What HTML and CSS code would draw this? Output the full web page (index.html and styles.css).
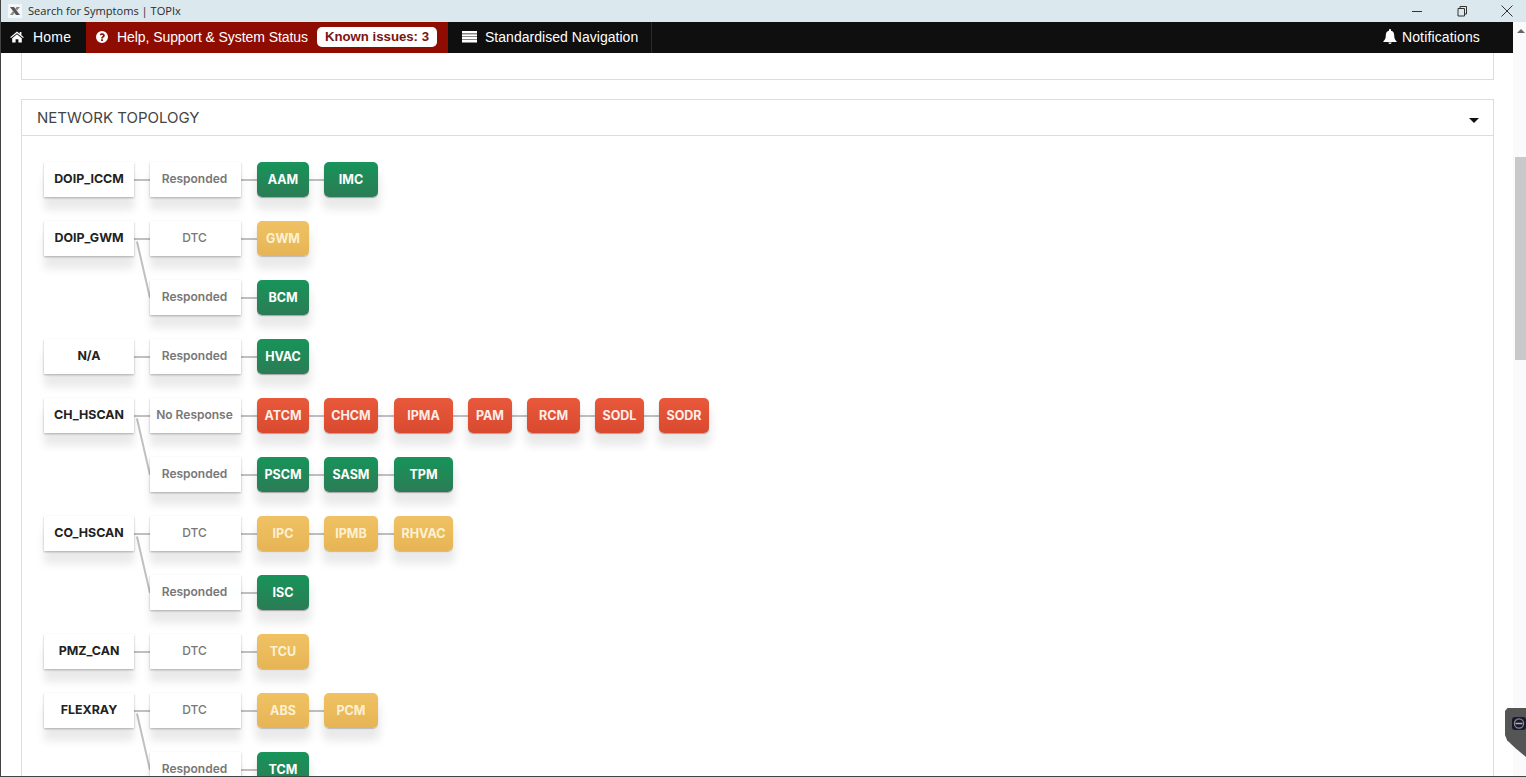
FILE: index.html
```html
<!DOCTYPE html>
<html lang="en">
<head>
<meta charset="utf-8">
<title>Search for Symptoms | TOPIx</title>
<link rel="stylesheet" href="styles.css">
</head>
<body>
<div class="window">
  <header class="titlebar">
    <svg class="favicon" viewBox="0 0 14 14"><rect width="14" height="14" fill="#f4f6f7"/><path d="M2 3 L6 3 L12 11 L8 11 Z" fill="#555"/><path d="M12 3 L8.5 3 L7.4 4.6 L9 6.6 Z" fill="#888"/><path d="M2 11 L5 11 L6.4 8.8 L5 7 Z" fill="#888"/></svg>
    <span class="title-text">Search for Symptoms | TOPIx</span>
    <div class="win-controls">
      <svg viewBox="0 0 12 12"><path d="M1 6.5H11" stroke="#333" stroke-width="1" fill="none"/></svg>
      <svg viewBox="0 0 12 12"><path d="M2 3.5H8.5V11H2Z M4 3.5V1.5H10.5V9H8.5" stroke="#333" stroke-width="1" fill="none"/></svg>
      <svg viewBox="0 0 12 12"><path d="M0.5 0.5L11.5 11.5M11.5 0.5L0.5 11.5" stroke="#333" stroke-width="1" fill="none"/></svg>
    </div>
  </header>
  <div class="app">
    <div class="page">
      <nav class="nav">
        <a class="nav-item home">
          <svg class="icon" viewBox="0 0 14 12"><path d="M7 0.6L0.2 6.2L1 7.1L7 2.2L13 7.1L13.8 6.2L11.4 4.2V1H9.7V2.8ZM2.2 7.2V11.6H5.6V8.2H8.4V11.6H11.8V7.2L7 3.3Z" fill="#fff"/></svg>
          Home
        </a>
        <a class="nav-item help">
          <svg class="icon" viewBox="0 0 12 12"><path fill-rule="evenodd" d="M6 0a6 6 0 1 0 0 12A6 6 0 0 0 6 0ZM5.1 9.9V8.3H6.9V9.9ZM6.9 7.4H5.2C5.2 5.6 7 5.5 7 4.5 7 4 6.6 3.7 6.1 3.7 5.6 3.7 5.2 4 4.8 4.5L3.7 3.6C4.3 2.7 5.1 2.2 6.2 2.2 7.6 2.2 8.8 3.1 8.8 4.4 8.8 6 6.9 6.2 6.9 7.4Z" fill="#fff"/></svg>
          <span class="help-label">Help, Support &amp; System Status</span>
          <span class="issues">Known issues: 3</span>
        </a>
        <a class="nav-item std">
          <svg class="icon icon-list" viewBox="0 0 15 12"><path d="M0 0H15V2.6H0ZM0 3.2H15V5.4H0ZM0 6H15V8.2H0ZM0 8.8H15V11.4H0Z" fill="#fff"/></svg>
          Standardised Navigation
        </a>
        <a class="nav-item notif">
          <svg class="icon icon-bell" viewBox="0 0 14 15"><path d="M7 0C6.4 0 6 .4 6 1V1.7C3.8 2.2 2.8 4 2.8 6.2 2.8 9.6 1.8 11 .4 12.2V13H13.6V12.2C12.2 11 11.2 9.6 11.2 6.2 11.2 4 10.2 2.2 8 1.7V1C8 .4 7.6 0 7 0ZM5.4 13.6C5.4 14.4 6.1 15 7 15S8.6 14.4 8.6 13.6Z" fill="#fff"/></svg>
          Notifications
        </a>
      </nav>
      <main class="content">
        <section class="panel panel-top"></section>
        <section class="panel">
          <div class="panel-head">
            <h2>NETWORK TOPOLOGY</h2>
            <span class="caret"></span>
          </div>
          <div class="topology">
            <div class="node root">DOIP_ICCM</div>
            <div class="node state">Responded</div>
            <div class="node dev ok">AAM</div>
            <div class="node dev ok col4">IMC</div>

            <div class="node root">DOIP_GWM</div>
            <div class="node state light">DTC</div>
            <div class="node dev warn">GWM</div>

            <div class="node state sub">Responded</div>
            <div class="node dev ok">BCM</div>

            <div class="node root">N/A</div>
            <div class="node state">Responded</div>
            <div class="node dev ok">HVAC</div>

            <div class="node root">CH_HSCAN</div>
            <div class="node state">No Response</div>
            <div class="node dev bad">ATCM</div>
            <div class="node dev bad col4">CHCM</div>
            <div class="node dev bad">IPMA</div>
            <div class="node dev bad">PAM</div>
            <div class="node dev bad">RCM</div>
            <div class="node dev bad">SODL</div>
            <div class="node dev bad">SODR</div>

            <div class="node state sub">Responded</div>
            <div class="node dev ok">PSCM</div>
            <div class="node dev ok col4">SASM</div>
            <div class="node dev ok">TPM</div>

            <div class="node root">CO_HSCAN</div>
            <div class="node state light">DTC</div>
            <div class="node dev warn">IPC</div>
            <div class="node dev warn col4">IPMB</div>
            <div class="node dev warn">RHVAC</div>

            <div class="node state sub">Responded</div>
            <div class="node dev ok">ISC</div>

            <div class="node root">PMZ_CAN</div>
            <div class="node state light">DTC</div>
            <div class="node dev warn">TCU</div>

            <div class="node root">FLEXRAY</div>
            <div class="node state light">DTC</div>
            <div class="node dev warn">ABS</div>
            <div class="node dev warn col4">PCM</div>

            <div class="node state sub">Responded</div>
            <div class="node dev ok">TCM</div>
          </div>
        </section>
      </main>
    </div>
    <aside class="scrollbar">
      <span class="arrow"></span>
      <span class="thumb"></span>
    </aside>
    <div class="feedback">
      <svg class="feedback-icon" viewBox="0 0 14 13"><rect width="14" height="13" rx="3" fill="#1a1a2e"/><circle cx="7" cy="6.5" r="4.6" fill="none" stroke="#8a8a90" stroke-width="1.2"/><path d="M3.5 6.5H10.5" stroke="#b0b0b4" stroke-width="1.4"/></svg>
    </div>
  </div>
</div>
</body>
</html>
```

FILE: styles.css
```css
* { box-sizing: border-box; }
html, body { margin: 0; height: 100%; overflow: hidden; }
body { background: #fff; font-family: "Liberation Sans", Arial, sans-serif; }

.window {
  height: 777px;
  display: flex;
  flex-direction: column;
  border-left: 1px solid #444;
  border-bottom: 1px solid #444;
}

.titlebar {
  height: 22px;
  flex: none;
  display: flex;
  align-items: center;
  background: #dbe8ed;
  padding-left: 7px;
}
.favicon { width: 14px; height: 14px; margin-right: 6px; }
.title-text { font: 11.1px "Open Sans", sans-serif; color: #2a2a2a; padding-bottom: 1px; }
.win-controls { margin-left: auto; display: flex; gap: 33px; padding-right: 13px; align-items: center; }
.win-controls svg { width: 12px; height: 12px; display: block; }

.app { flex: 1; min-height: 0; display: flex; position: relative; }
.page { flex: 1; min-width: 0; display: flex; flex-direction: column; }

.nav {
  height: 31px;
  flex: none;
  display: flex;
  align-items: stretch;
  background: #0f0f0f;
  color: #fff;
  font-size: 14px;
}
.nav-item { display: flex; align-items: center; border-right: 1px solid #2a2a2a; padding-bottom: 2px; }
.icon { width: 12px; height: 12px; flex: none; }
.home { width: 85px; padding-left: 9px; gap: 9px; border-right: 0; letter-spacing: .2px; }
.home .icon { width: 14px; }
.help { width: 362px; background: #8f0c00; padding-left: 10px; gap: 9px; border-right: 0; }
.help-label { letter-spacing: -.07px; }
.issues {
  background: #fff;
  color: #7a1414;
  font-weight: 700;
  font-size: 13.2px;
  height: 20px;
  line-height: 20px;
  padding: 0 8px;
  border-radius: 5px;
}
.std { width: 204px; padding-left: 14px; gap: 8px; letter-spacing: .03px; }
.icon-list { width: 15px; }
.notif { margin-left: auto; padding-right: 33px; gap: 5px; border-right: 0; letter-spacing: .14px; }
.icon-bell { width: 14px; height: 15px; }

.content { flex: 1; min-height: 0; overflow: hidden; padding: 0 19px 0 20px; }
.panel { border: 1px solid #ddd; border-bottom: 0; margin-bottom: 19px; }
.panel-top { height: 27px; border-top: 0; border-bottom: 1px solid #ddd; }
.panel-head {
  height: 36px;
  display: flex;
  align-items: center;
  justify-content: space-between;
  padding: 0 15px;
  border-bottom: 1px solid #ddd;
}
.panel-head h2 { margin: 0; font: 400 15px Inter, sans-serif; color: #444; }
.caret {
  width: 0; height: 0; margin: 6px -1px 0 0;
  border-left: 5px solid transparent;
  border-right: 5px solid transparent;
  border-top: 5px solid #111;
}

.topology {
  display: grid;
  grid-template-columns: 91px 92px 52px 55px 59px 44px 53px 49px 50px;
  grid-auto-rows: 35px;
  column-gap: 15px;
  row-gap: 24px;
  padding: 26px 0 0 22px;
  font-family: Inter, sans-serif;
}

.node {
  position: relative;
  display: flex;
  align-items: center;
  justify-content: center;
  white-space: nowrap;
}
.root, .state {
  background: #fff;
  margin-right: 1px;
  box-shadow: 0 1px 2px rgba(0,0,0,.28), 0 13px 8px 0 rgba(0,0,0,.085);
}
.root { grid-column: 1; font-size: 12.4px; font-weight: 700; color: #222; padding-bottom: 2px; }
.state { grid-column: 2; font-size: 12px; font-weight: 600; color: #777; padding: 0 2px 2px 0; }
.state.light { font-weight: 500; }
.state.sub { grid-column: 2; }

.state::before, .dev::before {
  content: "";
  position: absolute;
  z-index: -1;
  top: 50%;
  left: -16px;
  width: 16px;
  height: 2px;
  margin-top: -1px;
  background: #c0c0c0;
}
.state.sub::before {
  left: -1px;
  top: auto;
  bottom: 50%;
  width: 1.5px;
  height: 58px;
  margin: 0;
  transform-origin: bottom center;
  transform: rotate(-13deg);
}

.dev {
  border-radius: 5px;
  font-size: 12.5px;
  font-weight: 700;
  color: #fff;
}
.col4 { margin-right: 1px; }
.ok   { background: linear-gradient(#17945a, #2b7c55); box-shadow: 0 1px 1px rgba(0,0,0,.3), 0 11px 8px 2px rgba(0,0,0,.085); }
.warn { background: linear-gradient(#f0c263, #e6b455); color: #fdf1d3; box-shadow: 0 1px 1px rgba(0,0,0,.2), 0 11px 8px 2px rgba(0,0,0,.085); }
.bad  { background: linear-gradient(#e9583b, #d84a2f); color: #fdeee9; box-shadow: 0 1px 1px rgba(0,0,0,.3), 0 11px 8px 2px rgba(0,0,0,.085); }

.scrollbar { width: 13px; flex: none; background: #fafafa; display: flex; flex-direction: column; }
.arrow {
  margin: 7px 0 0 4px;
  width: 0; height: 0;
  border-left: 4px solid transparent;
  border-right: 4px solid transparent;
  border-bottom: 4px solid #666;
}
.thumb { width: 11px; height: 203px; margin: 124px 0 0 2px; background: #c9c9c9; }

.feedback {
  position: absolute;
  right: 0;
  top: 686px;
  width: 21px;
  height: 49px;
  background: #555;
  clip-path: polygon(12% 0, 100% 0, 100% 100%, 50% 82%, 10% 66%, 0 55%, 0 6%);
  padding: 9px 0 0 7px;
}
.feedback-icon { display: block; width: 14px; height: 13px; }
```
